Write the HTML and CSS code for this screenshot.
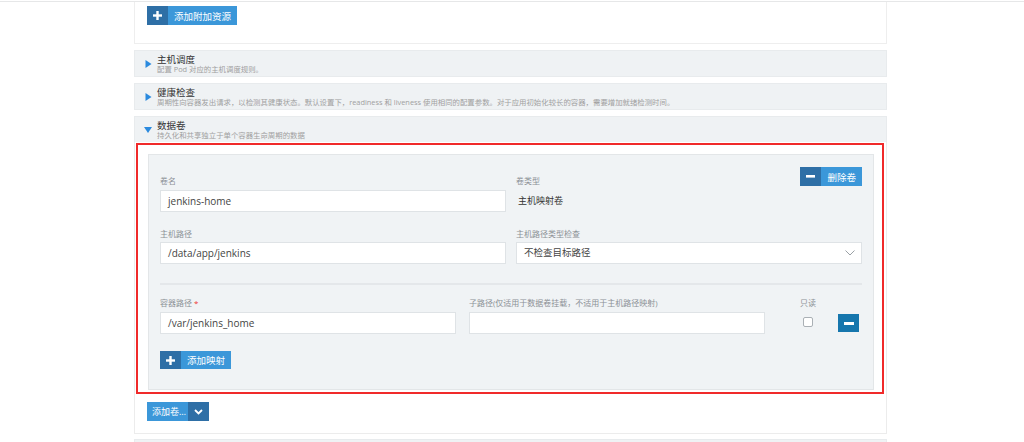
FILE: index.html
```html
<!DOCTYPE html>
<html lang="zh-CN">
<head>
<meta charset="utf-8">
<title>数据卷</title>
<link rel="stylesheet" href="styles.css">
</head>
<body>
<div class="topline"></div>
<div class="page">
  <div class="top-card">
    <button class="btn"><span class="ic"><svg width="9" height="9" viewBox="0 0 9 9"><rect x="3.3" y="0" width="2.4" height="9" fill="#fff"/><rect x="0" y="3.3" width="9" height="2.4" fill="#fff"/></svg></span><span class="tx">添加附加资源</span></button>
  </div>

  <div class="sect">
    <svg class="tri" width="6" height="8" viewBox="0 0 6 8"><path d="M0 0 L6 4 L0 8 Z" fill="#2b8ade"/></svg>
    <div class="sect-text">
      <div class="st">主机调度</div>
      <div class="sd">配置 Pod 对应的主机调度规则。</div>
    </div>
  </div>

  <div class="sect">
    <svg class="tri" width="6" height="8" viewBox="0 0 6 8"><path d="M0 0 L6 4 L0 8 Z" fill="#2b8ade"/></svg>
    <div class="sect-text">
      <div class="st">健康检查</div>
      <div class="sd">周期性向容器发出请求，以检测其健康状态。默认设置下，readiness 和 liveness 使用相同的配置参数。对于应用初始化较长的容器，需要增加就绪检测时间。</div>
    </div>
  </div>

  <div class="sect open">
    <svg class="tri" width="8" height="6" viewBox="0 0 8 6"><path d="M0 0 L8 0 L4 6 Z" fill="#2b8ade"/></svg>
    <div class="sect-text">
      <div class="st">数据卷</div>
      <div class="sd">持久化和共享独立于单个容器生命周期的数据</div>
    </div>
  </div>

  <div class="sect-body">
    <div class="highlight">
      <div class="panel">
        <div class="grid2">
          <div class="field">
            <div class="lbl-row"><span class="lbl">卷名</span></div>
            <div class="input">jenkins-home</div>
          </div>
          <div class="field">
            <div class="lbl-row split">
              <span class="lbl">卷类型</span>
              <button class="btn"><span class="ic"><svg width="9" height="3" viewBox="0 0 9 3"><rect x="0" y="0" width="9" height="2.6" fill="#fff"/></svg></span><span class="tx">删除卷</span></button>
            </div>
            <div class="static">主机映射卷</div>
          </div>

          <div class="field row2">
            <span class="lbl">主机路径</span>
            <div class="input">/data/app/jenkins</div>
          </div>
          <div class="field row2">
            <span class="lbl">主机路径类型检查</span>
            <div class="input select">
              <span>不检查目标路径</span>
              <svg width="10" height="6" viewBox="0 0 10 6"><path d="M0.5 0.5 L5 5 L9.5 0.5" fill="none" stroke="#9aa0a5" stroke-width="1"/></svg>
            </div>
          </div>
        </div>

        <div class="divider"></div>

        <div class="mount-row">
          <div class="field mcol">
            <span class="lbl">容器路径 <em class="req">*</em></span>
            <div class="input">/var/jenkins_home</div>
          </div>
          <div class="field mcol">
            <span class="lbl">子路径(仅适用于数据卷挂载，不适用于主机路径映射)</span>
            <div class="input"></div>
          </div>
          <div class="field ro">
            <span class="lbl">只读</span>
            <span class="checkbox"></span>
          </div>
          <button class="minus"><svg width="10" height="3" viewBox="0 0 10 3"><rect x="0" y="0" width="10" height="3" fill="#fff"/></svg></button>
        </div>

        <div class="add-map-row">
          <button class="btn add-map"><span class="ic"><svg width="9" height="9" viewBox="0 0 9 9"><rect x="3.3" y="0" width="2.4" height="9" fill="#fff"/><rect x="0" y="3.3" width="9" height="2.4" fill="#fff"/></svg></span><span class="tx">添加映射</span></button>
        </div>
      </div>
    </div>

    <div class="split-row">
      <div class="split-btn">
        <span class="tx">添加卷…</span>
        <span class="caret"><svg width="9" height="6" viewBox="0 0 9 6"><path d="M1 1 L4.5 4.5 L8 1" fill="none" stroke="#fff" stroke-width="1.8"/></svg></span>
      </div>
    </div>
  </div>

  <div class="sect next"></div>
</div>
</body>
</html>
```

FILE: styles.css
```css
* { box-sizing: border-box; }
html, body { margin: 0; padding: 0; background: #fff; }
body {
  font-family: "Open Sans", "Noto Sans CJK SC", sans-serif;
  color: #333;
  padding-top: 1px;
  overflow: hidden;
  height: 442px;
}
.topline { height: 1px; background: #e6e7e8; }

.page { width: 753px; margin-left: 134px; }

.top-card {
  display: flex;
  align-items: flex-start;
  border: 1px solid #eeeeee;
  border-top: none;
  height: 42px;
  padding: 4px 12px 0 12px;
}

.btn {
  display: inline-flex;
  height: 19px;
  padding: 0;
  border: 0;
  font-family: inherit;
  font-size: 9.5px;
  color: #fff;
  cursor: pointer;
  background: none;
}
.btn .ic {
  width: 21px;
  display: flex;
  align-items: center;
  justify-content: center;
  background: #2e6fa6;
}
.btn .tx {
  display: flex;
  align-items: center;
  padding: 0 6px 0 6px;
  background: #3b97d9;
}

.sect {
  margin-top: 6px;
  height: 27px;
  background: #eff2f4;
  border: 1px solid #e8ebed;
  display: flex;
  align-items: center;
  padding-left: 9px;
}
.sect .tri { flex: none; width: 9px; margin-right: 4px; }
.sect.open .tri { width: 8px; margin-right: 5px; }
.sect-text { display: flex; flex-direction: column; min-width: 0; }
.st { font-size: 9.5px; line-height: 11px; color: #333; }
.sd { font-size: 7.4px; line-height: 9px; color: #a0a0a0; white-space: nowrap; }

.sect.open { border-bottom: none; height: 26px; }

.sect-body {
  border: 1px solid #ececec;
  border-top: none;
  padding: 1px 2px 12px 1px;
}
.highlight {
  border: 2px solid #f02a2a;
  padding: 9px 8px 2px 10px;
}
.panel {
  background: #f0f3f5;
  border: 1px solid #e3e6e8;
  padding: 12px 11px 20px 11px;
}

.grid2 {
  display: grid;
  grid-template-columns: 1fr 1fr;
  column-gap: 10px;
}
.field { display: flex; flex-direction: column; }
.lbl-row {
  height: 19px;
  display: flex;
  align-items: flex-end;
  margin-bottom: 4px;
}
.lbl-row.split { justify-content: space-between; }
.lbl {
  font-size: 8px;
  line-height: 11px;
  height: 11px;
  color: #8c9196;
  white-space: nowrap;
}
.field.row2 { margin-top: 16px; }
.field.row2 .lbl { margin-bottom: 3px; }

.input {
  height: 22px;
  background: #fff;
  border: 1px solid #dfe3e6;
  font-size: 10px;
  line-height: 20px;
  padding: 0 7px;
  color: #444;
}
.input.select {
  display: flex;
  align-items: center;
  justify-content: space-between;
  font-size: 9.5px;
  padding: 0 6px 0 7px;
}
.static {
  height: 22px;
  line-height: 22px;
  font-size: 9px;
  color: #333;
  padding-left: 2px;
}

.divider {
  height: 2px;
  background: #e4e7ea;
  margin-top: 19px;
}

.mount-row {
  display: flex;
  align-items: flex-start;
  margin-top: 12px;
}
.mount-row .lbl { margin-bottom: 4px; }
.mcol { width: 296px; }
.mcol + .mcol { margin-left: 13px; }
.req { font-style: normal; color: #e33; }
.ro {
  width: 30px;
  margin-left: 28px;
  align-items: center;
}
.checkbox {
  margin-top: 5px;
  width: 10px;
  height: 10px;
  border: 1px solid #aab0b5;
  border-radius: 2px;
  background: #fff;
}
.minus {
  margin-left: 15px;
  margin-top: 17px;
  width: 21px;
  height: 18px;
  border: 0;
  padding: 0;
  background: #1676ad;
  display: flex;
  align-items: center;
  justify-content: center;
}

.add-map-row { display: flex; margin-top: 17px; }
.btn.add-map { height: 18px; }

.split-row { display: flex; margin: 8px 0 0 11px; }
.split-btn {
  display: flex;
  height: 19px;
  font-size: 9px;
  color: #fff;
}
.split-btn .tx {
  display: flex;
  align-items: center;
  padding: 0 2px 0 5px;
  background: #3b97d9;
  white-space: nowrap;
}
.split-btn .caret {
  width: 21px;
  display: flex;
  align-items: center;
  justify-content: center;
  background: #2e6fa6;
}

.sect.next { margin-top: 5px; }
```
